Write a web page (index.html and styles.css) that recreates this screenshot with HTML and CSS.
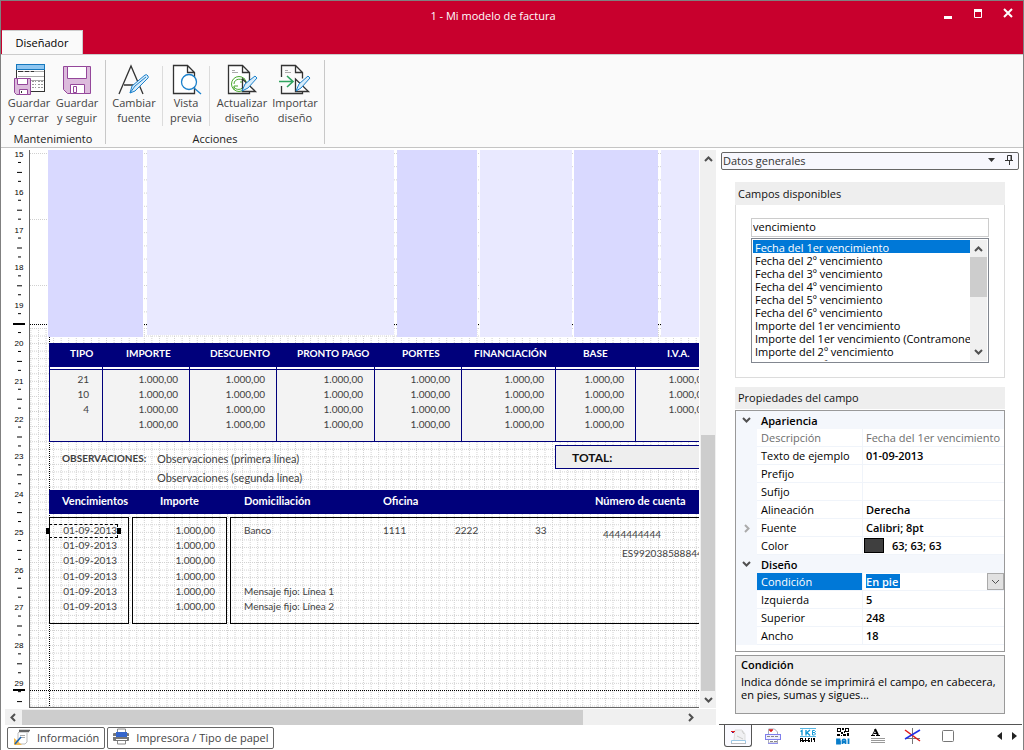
FILE: index.html
```html
<!DOCTYPE html>
<html lang="es">
<head>
<meta charset="utf-8">
<title>1 - Mi modelo de factura</title>
<link rel="stylesheet" href="styles.css">
</head>
<body>
<div class="window">
  <header class="titlebar">
    <h1 class="window-title">1 - Mi modelo de factura</h1>
    <div class="window-buttons">
      <button type="button" aria-label="Minimizar"><svg width="10" height="12"><rect x="1" y="9" width="8" height="3" fill="#fff"/></svg></button>
      <button type="button" aria-label="Maximizar"><svg width="10" height="12"><path d="M1.500 2.500h7v8h-7z" fill="none" stroke="#fff"/><rect x="1" y="2" width="8" height="3" fill="#fff"/></svg></button>
      <button type="button" aria-label="Cerrar"><svg width="10" height="12"><path d="M1 2l8 8M9 2l-8 8" stroke="#fff" stroke-width="2"/></svg></button>
    </div>
    <nav class="ribbon-tabs"><button type="button" class="ribbon-tab">Diseñador</button></nav>
  </header>

  <div class="ribbon">
    <section class="ribbon-group maintenance">
      <div class="ribbon-items">
        <button type="button" class="tool w48">
          <svg width="32" height="32" fill="none"><rect x="3.500" y="1.500" width="28" height="27" fill="#fff" stroke="#333"/><rect x="3.500" y="1.500" width="28" height="5" fill="#8fc6f0" stroke="#1678bd"/><path d="M5 8.500h26M5 13.500h26M9 17.500h22" stroke="#aaa"/><path d="M5 8.500h5M12 8.500h4M18 8.500h3" stroke="#333"/><path d="M19 18.500h4M25 18.500h6M19 21.500h4M25 21.500h6M19 24.500h4M25 24.500h6" stroke="#999" stroke-dasharray="2 1"/><path d="M1.500 15.500h16v16h-14l-2-2z" fill="#dcbbdc" stroke="#94479a"/><path d="M4.500 15.500h10v6h-10zM6.500 26.500h8v5h-8z" fill="#fff" stroke="#94479a"/><path d="M8.500 28v2" stroke="#333"/></svg>
          <span>Guardar<br>y cerrar</span></button>
        <button type="button" class="tool w48">
          <svg width="32" height="32" fill="none"><path d="M2.500 3.500h27v27h-23l-4-4z" fill="#dcbbdc" stroke="#94479a"/><path d="M6.500 3.500h19v12h-19zM9.500 21.500h14v9h-14z" fill="#fff" stroke="#94479a"/><path d="M12.500 23.500h3v6h-3z" stroke="#94479a"/></svg>
          <span>Guardar<br>y seguir</span></button>
      </div>
      <h2>Mantenimiento</h2>
    </section>
    <section class="ribbon-group actions">
      <div class="ribbon-items">
        <button type="button" class="tool w56">
          <svg width="32" height="32" fill="none"><path d="M1 31L13 3L25 31M6 22h14" stroke="#333" stroke-width="1.300"/><path d="M12 30l2-7L27 12q2-1 3 1t-1 3L17 28z" fill="#d8ecfa" stroke="#1a80cc"/><path d="M12 30l5-7L28 14" stroke="#1a80cc"/></svg>
          <span>Cambiar<br>fuente</span></button>
        <span class="tool-separator"></span>
        <button type="button" class="tool w46">
          <svg width="32" height="32" fill="none"><path d="M3.500 2.500h14l7 7v21h-21zM17.500 2.500v7h7" fill="#fff" stroke="#333" stroke-width="1.300"/><circle cx="19" cy="19" r="7.500" fill="#fff" stroke="#1a80cc" stroke-width="1.300"/><path d="M24 25l7 6" stroke="#1a80cc" stroke-width="1.300"/></svg>
          <span>Vista<br>previa</span></button>
        <span class="tool-separator"></span>
        <button type="button" class="tool w64">
          <svg width="32" height="32" fill="none"><path d="M2.500 2.500h14l7 7v21h-21zM16.500 2.500v7h7" fill="#fff" stroke="#333" stroke-width="1.300"/><path d="M6 7.500h3M6 9.500h6" stroke="#aaa"/><circle cx="13" cy="21" r="7.500" stroke="#4aa82e"/><path d="M8 21c0-6 9-6 10-2m0-4v4h-4M18 22c-1 6-9 5-10 2m0 3v-4h4" stroke="#4aa82e"/><path d="M16.500 16v12.500h13z" fill="#fff" stroke="#333" stroke-width="1.300"/><path d="M16 28l3-7L29 13l2 2L22 25z" fill="#d8ecfa" stroke="#1a80cc"/></svg>
          <span>Actualizar<br>diseño</span></button>
        <button type="button" class="tool w48">
          <svg width="32" height="32" fill="none"><path d="M2.500 14v-11.500h14l7 7v6M16.500 2.500v7h7M2.500 23v7.500h21v-2" stroke="#333" stroke-width="1.300"/><path d="M6 7.500h3M6 9.500h6" stroke="#aaa"/><path d="M0 18.500h13M8 13l6 5.500l-6 5.500" stroke="#2fa35e" stroke-width="1.600"/><path d="M16.500 16v12.500h13z" fill="#fff" stroke="#333" stroke-width="1.300"/><path d="M17 28l3-7L29 13l2 2L22 25z" fill="#d8ecfa" stroke="#1a80cc"/></svg>
          <span>Importar<br>diseño</span></button>
      </div>
      <h2>Acciones</h2>
    </section>
  </div>

  <main class="workspace">
    <section class="designer">
      <div class="sheet">
        <svg class="ruler" aria-label="Regla vertical" shape-rendering="crispEdges">
          <defs><pattern id="ticks" x="0" y="3" width="29" height="37.800" patternUnits="userSpaceOnUse"><path d="M18 9h3v1h-3zM17 19h5v1h-5zM18 28h3v1h-3z"/></pattern></defs>
          <rect width="29" height="100%" fill="url(#ticks)"/>
          <path d="M13 174h12M13 540h12" stroke="#000" stroke-width="2"/>
          <g class="ruler-numbers"><text x="19" y="7">15</text><text x="19" y="45">16</text><text x="19" y="83">17</text><text x="19" y="120">18</text><text x="19" y="158">19</text><text x="19" y="196">20</text><text x="19" y="234">21</text><text x="19" y="272">22</text><text x="19" y="309">23</text><text x="19" y="347">24</text><text x="19" y="385">25</text><text x="19" y="423">26</text><text x="19" y="460">27</text><text x="19" y="498">28</text><text x="19" y="536">29</text></g>
        </svg>
        <div class="canvas">
          <svg class="grid-lines" shape-rendering="crispEdges">
            <defs>
              <pattern id="rows" x="0" y="178" width="2" height="7.550" patternUnits="userSpaceOnUse"><rect width="1" height="1" fill="#d0d0d0"/></pattern>
              <pattern id="cols" x="8" y="0" width="7.560" height="2" patternUnits="userSpaceOnUse"><rect width="1" height="1" fill="#d0d0d0"/></pattern>
              <pattern id="far" x="0" y="3" width="2" height="13.200" patternUnits="userSpaceOnUse"><rect width="1" height="1" fill="#d0d0d0"/></pattern>
            </defs>
            <rect x="110" width="100%" height="177" fill="url(#far)"/>
            <path d="M0 3.500h18M0 69.500h18M0 135.500h18" stroke="#d0d0d0" stroke-dasharray="1 1"/>
            <rect y="178" width="100%" height="100%" fill="url(#rows)"/>
            <rect y="178" width="100%" height="100%" fill="url(#cols)"/>
            <path d="M0 174.500h2000M0 540.500h2000M19.500 187v2000" stroke="#000" stroke-dasharray="1 1"/>
          </svg>
          <div class="band dark band-1"></div><div class="band light band-2"></div><div class="band dark band-3"></div>
          <div class="band light band-4"></div><div class="band dark band-5"></div><div class="band light band-6"></div>

          <table class="totals">
            <colgroup><col class="c53"><col class="c87"><col class="c87"><col class="c98"><col class="c87"><col class="c94"><col class="c80"><col class="c84"></colgroup>
            <thead><tr><th class="pad-21">TIPO</th><th class="pad-24">IMPORTE</th><th class="pad-21">DESCUENTO</th><th class="pad-21">PRONTO PAGO</th><th class="pad-28">PORTES</th><th class="pad-13">FINANCIACIÓN</th><th class="pad-28">BASE</th><th class="pad-32">I.V.A.</th></tr></thead>
            <tbody>
              <tr><td>21</td><td>1.000,00</td><td>1.000,00</td><td>1.000,00</td><td>1.000,00</td><td>1.000,00</td><td>1.000,00</td><td>1.000,00</td></tr>
              <tr><td>10</td><td>1.000,00</td><td>1.000,00</td><td>1.000,00</td><td>1.000,00</td><td>1.000,00</td><td>1.000,00</td><td>1.000,00</td></tr>
              <tr><td>4</td><td>1.000,00</td><td>1.000,00</td><td>1.000,00</td><td>1.000,00</td><td>1.000,00</td><td>1.000,00</td><td>1.000,00</td></tr>
              <tr><td></td><td>1.000,00</td><td>1.000,00</td><td>1.000,00</td><td>1.000,00</td><td>1.000,00</td><td>1.000,00</td><td></td></tr>
            </tbody>
          </table>

          <div class="field notes-label">OBSERVACIONES:</div>
          <div class="field notes-1">Observaciones (primera línea)</div>
          <div class="field notes-2">Observaciones (segunda línea)</div>
          <div class="field total-box">TOTAL:</div>

          <div class="due-header"></div>
          <div class="field head h-due">Vencimientos</div><div class="field head h-amount">Importe</div><div class="field head h-bank">Domiciliación</div><div class="field head h-office">Oficina</div><div class="field head h-account">Número de cuenta</div>

          <div class="due-box box-dates"><span>01-09-2013</span><span>01-09-2013</span><span>01-09-2013</span><span>01-09-2013</span><span>01-09-2013</span><span>01-09-2013</span></div>
          <div class="due-box box-amounts"><span>1.000,00</span><span>1.000,00</span><span>1.000,00</span><span>1.000,00</span><span>1.000,00</span><span>1.000,00</span></div>
          <div class="due-box box-bank"><span>Banco</span><span></span><span></span><span></span><span>Mensaje fijo: Línea 1</span><span>Mensaje fijo: Línea 2</span></div>
          <div class="field digits bank-office">1111</div><div class="field digits bank-branch">2222</div><div class="field digits bank-control">33</div>
          <div class="field digits bank-account">4444444444</div><div class="field digits bank-iban">ES9920385888444444</div>
          <div class="selection"></div>
        </div>
        <div class="scroll-v">
          <svg width="9" height="6"><path d="M1 5l3.500-3.500L8 5" class="arrow"/></svg>
          <div class="track-v"><div class="thumb-v"></div></div>
          <svg width="9" height="6"><path d="M1 1l3.500 3.500L8 1" class="arrow"/></svg>
        </div>
      </div>
      <div class="scroll-h">
        <svg width="6" height="9"><path d="M5 1L1.500 4.500L5 8" class="arrow"/></svg>
        <div class="track-h"><div class="thumb-h"></div></div>
        <svg width="6" height="9"><path d="M1 1l3.500 3.500L1 8" class="arrow"/></svg>
      </div>
      <div class="bottom-buttons">
        <button type="button"><svg width="18" height="18" fill="none"><path d="M16 3h-9l-2 2v9l-2 2h9l2-2v-9" stroke="#bbb"/><path d="M6 3.500h10M6 2.500h11" stroke="#666" stroke-width="1.500"/><path d="M7 7.500h5M7 9.500h5" stroke="#aaa"/><path d="M1 10l8 7h-8z" fill="#f2b950"/><path d="M2 16l6-7" stroke="#1d64b0" stroke-width="1.600"/></svg>Información</button>
        <button type="button"><svg width="18" height="18" fill="none"><path d="M5.500 5v-4h8v4M5.500 12v4h8v-4" fill="#fff" stroke="#888"/><rect x="1" y="5" width="16" height="8" rx="1" fill="#777"/><rect x="4" y="4" width="11" height="5" fill="#3566cc"/><path d="M1 8.500h3M15 8.500h2M4 11.500h11" stroke="#fff"/></svg>Impresora / Tipo de papel</button>
      </div>
    </section>

    <aside class="side">
      <div class="panel-title"><span>Datos generales</span>
        <svg width="27" height="12"><path d="M0 4h7l-3.500 4z" fill="#333"/><path d="M19.500 1.500h4v5h-4zM17 6.500h8M21.500 7v4" fill="none" stroke="#333"/><path d="M23 1v5" stroke="#333"/></svg>
      </div>
      <div class="side-body">
        <section class="fields-group">
          <h3><label for="search">Campos disponibles</label></h3>
          <div class="fields-body">
            <input id="search" type="text" value="vencimiento">
            <div class="list-wrap">
              <select size="9" aria-label="Campos">
                <option selected>Fecha del 1er vencimiento</option><option>Fecha del 2º vencimiento</option><option>Fecha del 3º vencimiento</option><option>Fecha del 4º vencimiento</option><option>Fecha del 5º vencimiento</option><option>Fecha del 6º vencimiento</option><option>Importe del 1er vencimiento</option><option>Importe del 1er vencimiento (Contramoneda)</option><option>Importe del 2º vencimiento</option><option>Importe del 2º vencimiento (Contramoneda)</option>
              </select>
              <div class="list-scroll">
                <svg width="9" height="6"><path d="M1 5l3.500-3.500L8 5" class="arrow"/></svg>
                <div class="list-track"><div class="list-thumb"></div></div>
                <svg width="9" height="6"><path d="M1 1l3.500 3.500L8 1" class="arrow"/></svg>
              </div>
            </div>
          </div>
        </section>
        <section class="props-group">
          <h3>Propiedades del campo</h3>
          <table class="props">
            <colgroup><col class="gutter-col"><col class="name-col"><col></colgroup>
            <tbody>
            <tr class="cat"><td><svg width="9" height="6"><path d="M1 1l3.500 3.500L8 1" class="arrow"/></svg></td><th colspan="2">Apariencia</th></tr>
            <tr class="muted"><td></td><th>Descripción</th><td>Fecha del 1er vencimiento</td></tr>
            <tr><td></td><th>Texto de ejemplo</th><td>01-09-2013</td></tr>
            <tr><td></td><th>Prefijo</th><td></td></tr>
            <tr><td></td><th>Sufijo</th><td></td></tr>
            <tr><td></td><th>Alineación</th><td>Derecha</td></tr>
            <tr><td><svg width="6" height="9"><path d="M1 1l3.500 3.500L1 8" class="arrow faint"/></svg></td><th>Fuente</th><td>Calibri; 8pt</td></tr>
            <tr><td></td><th>Color</th><td><div class="color-value"><i class="swatch"></i>63; 63; 63</div></td></tr>
            <tr class="cat"><td><svg width="9" height="6"><path d="M1 1l3.500 3.500L8 1" class="arrow"/></svg></td><th colspan="2">Diseño</th></tr>
            <tr class="active"><td></td><th><label for="cond">Condición</label></th><td class="edit"><div class="drop"><select id="cond"><option>En pie</option></select><span class="drop-arrow"><svg width="9" height="6"><path d="M1 1l3.500 3.500L8 1" class="arrow thin"/></svg></span></div></td></tr>
            <tr><td></td><th>Izquierda</th><td>5</td></tr>
            <tr><td></td><th>Superior</th><td>248</td></tr>
            <tr><td></td><th>Ancho</th><td>18</td></tr>
            </tbody>
          </table>
          <div class="help"><h4>Condición</h4><p>Indica dónde se imprimirá el campo, en cabecera, en pies, sumas y sigues...</p></div>
        </section>
      </div>
      <nav class="side-tabs">
        <button type="button" class="current" aria-label="Datos generales"><svg width="18" height="18" fill="none"><path d="M5 13l1-10h7l3 4v6" fill="#f0f0f3" stroke="#ddd"/><path d="M2 4.500h4M4.500 4v2" stroke="#e02020"/><path d="M3 5.500h1" stroke="#2222bb"/><path d="M8 9l6 3M13 4l2 3" stroke="#ccc"/><path d="M2.500 16v-2.500h14v2.500" fill="#fff" stroke="#9cc8e6"/><path d="M2 16.500h15" stroke="#b9b9bd"/></svg></button>
        <button type="button" aria-label="Cuerpo"><svg width="18" height="18" fill="none"><path d="M4.500 7v-5h6l3 3v11h-9v-4" stroke="#aaaaba"/><path d="M5 3h4M6 4h2" stroke="#dd2020" stroke-width="1.400"/><rect x="1.500" y="7.500" width="15" height="5" fill="#eef" stroke="#7f7fec"/><path d="M3 9.500h12M6 14.500h7" stroke="#888" stroke-dasharray="3 1"/><path d="M4 16.500h10" stroke="#9090ee"/></svg></button>
        <button type="button" aria-label="Código de barras"><svg width="18" height="18"><path d="M1 1.500h16M1 9.500h16" stroke="#58b7e4"/><path d="M1.500 4.500l1.500-1v5M7 3v5.500M11 3l-3 2.500l3 3" fill="none" stroke="#149bd8" stroke-width="1.400"/><path d="M13.500 3.500h2l1 1l-1 1h-2zM13.500 5.500h2l1 1.500l-1 1h-2z" fill="none" stroke="#149bd8"/><path d="M1 11h3v2h2v-2h1v2h2v1h-2v1h-1v-1h-1v1h-2v-1h-1v1h-1zM9 11h2v1h-1v1h1v2h-2zM12 11h1v2h1v-2h2v4h-1v-2h-2v2h-1zM3 12h-1v1h1z" fill-rule="evenodd"/></svg></button>
        <button type="button" aria-label="Código QR"><svg width="18" height="18"><path d="M3 1h4v4h-4zM11 1h4v4h-4zM3 7h3v2h-3zM7 5h2v2h-2zM9 7h3v2h-3zM13 6h2v3h-2zM8 1h2v2h-2zM7 8h1v1h-1zM10 4h1v2h-1z"/><path d="M4 2h2v2h-2zM12 2h2v2h-2z" fill="#fff"/><path d="M3 12.500h2.500v1.500h-2.500zM3 14.500h3v2h-3zM8.500 17v-3.500q0-1 1.500-1t1.500 1v3.500M9 15h2M14.500 11.500v5.500" fill="none" stroke="#087dca" stroke-width="1.800"/></svg></button>
        <button type="button" aria-label="Texto"><svg width="18" height="18" fill="none"><path d="M2 8.500h4M7 8.500h4" stroke="#000"/><path d="M3.500 8L6.500 2" stroke="#000"/><path d="M6 2l3 6" stroke="#000" stroke-width="2"/><path d="M5 6.500h3" stroke="#000"/><path d="M2 11.500h14M2 13.500h14M2 15.500h14" stroke="#999"/></svg></button>
        <button type="button" aria-label="Línea"><svg width="18" height="18" fill="none"><path d="M8.500 1v16M1 11.500h15" stroke="#777"/><path d="M1 3l15 11" stroke="#e01818" stroke-width="1.500"/><path d="M1 12L16 3" stroke="#2030e8" stroke-width="1.500"/></svg></button>
        <button type="button" aria-label="Rectángulo"><svg width="18" height="18"><rect x="3.500" y="3.500" width="11" height="11" rx="1" fill="#fff" stroke="#777"/></svg></button>
        <button type="button" class="nav-arrows" aria-label="Desplazar"><svg width="20" height="10"><path d="M5 1v8l-5-4zM15 1v8l5-4z" fill="#222"/></svg></button>
      </nav>
    </aside>
  </main>
</div>
</body>
</html>
```
FILE: styles.css
```css
* { box-sizing: border-box; }
body { margin: 0; font: 11px/15px "Open Sans", "Noto Sans", sans-serif; color: #000; background: #fff; }
button, input, select { font: inherit; color: inherit; margin: 0; }
button { border: 0; padding: 0; background: none; }
h1, h2, h3, h4, p { margin: 0; font-size: inherit; font-weight: normal; }
svg { display: block; flex: none; }
.window { min-height: 100vh; display: flex; flex-direction: column; border: 1px solid #808080; border-bottom: 0; }

.titlebar { display: grid; grid-template-columns: 1fr auto 1fr; grid-template-rows: 29px 24px; background: #c8002d; }
.window-title { grid-column: 2; align-self: center; margin-right: 38px; color: #fff; }
.window-buttons { justify-self: end; display: flex; gap: 20px; align-items: center; padding: 0 10px 6px 0; }
.ribbon-tabs { grid-column: 1; grid-row: 2; display: flex; padding-left: 1px; }
.ribbon-tab { width: 81px; background: #fafafa; border-top: 1px solid #ccc; border-right: 1px solid #ccc; }

.ribbon { display: flex; background: #fafafa; border-top: 1px solid #ccc; border-bottom: 1px solid #c4c4c4; height: 94px; }
.ribbon-group { display: flex; flex-direction: column; justify-content: space-between; border-right: 1px solid #c8c8c8; margin: 5px 0 4px; height: 84px; }
.ribbon-items { display: flex; align-items: flex-start; }
.ribbon-group h2 { text-align: center; line-height: 11px; color: #222; }
.maintenance .ribbon-items { padding: 0 4px; }
.tool { display: flex; flex-direction: column; align-items: center; color: #444; padding-top: 3px; }
.w48 { width: 48px; } .w56 { width: 56px; } .w46 { width: 46px; } .w64 { width: 64px; }
.tool-separator { width: 1px; height: 60px; margin-top: 6px; background: #dcdcdc; }
.actions .ribbon-items { padding-right: 5px; }
.actions .w64 { margin-right: -3px; }

.workspace { flex: 1; display: flex; }
.designer { flex: 1; min-width: 0; display: flex; flex-direction: column; padding-top: 2px; }
.sheet { flex: 1; display: flex; min-height: 558px; }
.ruler { width: 29px; height: auto; margin-left: -1px; border-right: 1px solid #666; box-sizing: content-box; }
.ruler-numbers { font: 8px "Liberation Sans", sans-serif; text-anchor: middle; }
.canvas { flex: 1; position: relative; overflow: hidden; border-bottom: 1px solid #666; font: 11px/15px Lato, sans-serif; color: #3f3f3f; }
.grid-lines { position: absolute; width: 100%; height: 100%; }
.band { position: absolute; top: 0; height: 187px; }
.dark { background: #d9d9ff; } .light { background: #e9e9ff; }
.band-1 { left: 18px; width: 95px; }
.band-2 { left: 117px; width: 247px; height: 185px; }
.band-3 { left: 367px; width: 80px; }
.band-4 { left: 450px; width: 92px; }
.band-5 { left: 544px; width: 84px; }
.band-6 { left: 631px; right: 0; }

.totals { position: absolute; left: 19px; top: 193px; width: 670px; table-layout: fixed; border-spacing: 0; border-bottom: 1px solid #00007b; }
.c53 { width: 53px; } .c87 { width: 87px; } .c98 { width: 98px; } .c94 { width: 94px; } .c80 { width: 80px; } .c84 { width: 84px; }
.totals th { height: 24px; padding: 0 0 3px; background: #00007b; color: #fff; font-weight: bold; text-align: left; white-space: nowrap; font-size: 10px; }
.totals .pad-13 { padding-left: 13px; } .totals .pad-21 { padding-left: 21px; } .totals .pad-24 { padding-left: 24px; } .totals .pad-28 { padding-left: 28px; } .totals .pad-32 { padding-left: 32px; }
.totals td { padding: 0 11px 0 0; text-align: right; height: 15px; background: #f3f3f3; border-left: 1px solid #00007b; font-size: 10px; }
.totals td:first-child { padding-right: 13px; }
.totals tbody tr:first-child td { padding-top: 5px; background: linear-gradient(#fff 2px, #00007b 2px, #00007b 3px, #f3f3f3 3px); }
.totals tbody tr:last-child td { padding-bottom: 9px; }

.field { position: absolute; white-space: nowrap; }
.notes-label { left: 32px; top: 301px; font-weight: bold; font-size: 10px; }
.notes-1 { left: 127px; top: 301px; }
.notes-2 { left: 127px; top: 320px; }
.total-box { left: 525px; top: 295px; right: -2px; height: 24px; padding: 4px 16px; background: #eee; border: 1px solid #00007b; color: #111; font-weight: bold; font-size: 12px; }
.due-header { position: absolute; left: 19px; right: 0; top: 340px; height: 24px; background: #00007b; }
.head { top: 343px; color: #fff; font-weight: bold; }
.h-due { left: 32px; } .h-amount { left: 130px; } .h-bank { left: 214px; } .h-office { left: 353px; } .h-account { left: 565px; }
.due-box { position: absolute; top: 367px; height: 107px; padding-top: 5px; border: 1px solid #000; display: flex; flex-direction: column; font-size: 10px; }
.due-box span { height: 15px; }
.due-box span:nth-child(3) { margin-bottom: 1px; }
.box-dates { left: 19px; width: 80px; align-items: flex-end; padding-right: 11px; }
.box-amounts { left: 102px; width: 95px; align-items: flex-end; padding-right: 11px; }
.box-bank { left: 200px; right: -2px; padding-left: 13px; }
.digits { font-size: 10px; }
.bank-office { left: 353px; top: 373px; } .bank-branch { left: 425px; top: 373px; } .bank-control { left: 505px; top: 373px; }
.bank-account { left: 573px; top: 377px; } .bank-iban { left: 592px; top: 396px; }
.selection { position: absolute; left: 19px; top: 374px; width: 69px; height: 14px; border: 1px dashed #000; }
.selection::before, .selection::after { content: ""; position: absolute; top: 3px; width: 4px; height: 6px; background: #000; }
.selection::before { left: -4px; }
.selection::after { right: -4px; }

.arrow { fill: none; stroke: #505050; stroke-width: 2; }
.arrow.faint { stroke: #aaa; }
.arrow.thin { stroke-width: 1; }
.scroll-v { width: 16px; margin: 0 1px 0 1px; background: #f0f0f0; display: flex; flex-direction: column; align-items: center; padding: 6px 0 5px; gap: 6px; }
.track-v { flex: 1; width: 14px; display: flex; flex-direction: column; justify-content: flex-end; }
.thumb-v { height: 49%; background: #cdcdcd; }
.scroll-h { height: 16px; margin: 1px 1px 0 4px; background: #f0f0f0; display: flex; align-items: center; padding: 0 22px 0 5px; gap: 6px; }
.track-h { flex: 1; height: 15px; }
.thumb-h { width: 85%; height: 100%; background: #cdcdcd; }
.bottom-buttons { display: flex; gap: 2px; padding: 2px 6px 1px; }
.bottom-buttons button { display: flex; align-items: center; gap: 6px; height: 22px; padding: 0 5px 2px; border: 1px solid #666; border-radius: 2px; background: #fff; color: #444; }
.bottom-buttons button + button { padding: 0 4px 2px; }

.side { flex: none; width: 306px; display: flex; flex-direction: column; padding: 4px 1px 2px 2px; }
.panel-title { display: flex; align-items: center; justify-content: space-between; height: 18px; margin: 0 3px 0 2px; padding: 0 3px 2px 1px; border: 1px solid #666; border-radius: 2px; background: #f7f7fd; color: #333; }
.side-body { padding: 12px 17px 0 16px; }
.side h3 { background: #eee; line-height: 23px; padding-left: 3px; color: #111; }
.fields-body { border: 1px solid #dcdcdc; border-top: 0; padding: 13px 15px 14px 15px; }
#search { display: block; width: 100%; height: 19px; padding: 0 1px 2px; border: 1px solid #ccc; border-radius: 0; outline: 0; }
.list-wrap { display: flex; height: 125px; margin-top: 1px; border: 1px solid #828790; padding: 1px; }
.list-wrap select { flex: 1; min-width: 0; border: 0; padding: 0; outline: 0; overflow: hidden; background: #fff; border-radius: 0; scrollbar-width: none; height: 121px; }
.list-wrap option { padding: 0 2px; height: 13px; min-height: 13px; line-height: 11px; }
.list-wrap option:checked { background: #0078d7 linear-gradient(#0078d7, #0078d7); color: #fff; }
.list-scroll { width: 17px; background: #f0f0f0; display: flex; flex-direction: column; align-items: center; padding: 6px 0; gap: 5px; }
.list-track { flex: 1; width: 100%; }
.list-thumb { height: 46%; background: #cdcdcd; }

.props-group { margin-top: 9px; }
.props-group h3 { line-height: 22px; margin-bottom: 1px; }
.props { width: 100%; table-layout: fixed; border-collapse: separate; border-spacing: 0; border: 1px solid #999; padding-bottom: 6px; }
.gutter-col { width: 21px; } .name-col { width: 106px; }
.props td, .props th { height: 18px; line-height: 17px; padding: 0 0 0 4px; text-align: left; white-space: nowrap; border-bottom: 1px solid #f0f4fa; }
.props th { font-weight: normal; border-right: 1px solid #f0f4fa; }
.props td { font-weight: 600; padding-left: 3px; }
.props td:first-child { background: #f4f7fc; padding: 0; border: 0; }
.props td:first-child svg { margin: 0 auto; }
.props .cat th { background: #f4f7fc; font-weight: 600; border: 0; }
.props .muted th, .props .muted td { color: #6d6d6d; font-weight: normal; }
.props .active th { background: #0078d7; color: #fff; }
.props td.edit { padding: 0; }
.color-value { display: flex; align-items: center; gap: 8px; margin-left: -2px; }
.swatch { width: 20px; height: 15px; background: #3f3f3f; border: 1px solid #000; }
.drop { position: relative; height: 17px; }
.drop select { appearance: none; width: 100%; height: 17px; border: 0; padding: 0 3px; outline: 0; color: #fff; font-weight: 600; line-height: 15px; background: linear-gradient(#0078d7, #0078d7) 3px 1px / 34px 14px no-repeat #fff; }
.drop-arrow { position: absolute; right: 0; top: 0; width: 17px; height: 17px; display: grid; place-items: center; border: 1px solid #aaa; background: #e1e1e1; pointer-events: none; }
.help { margin-top: 3px; min-height: 59px; padding: 1px 5px; border: 1px solid #999; background: #eee; }
.help h4 { font-weight: 600; line-height: 16px; margin-bottom: 2px; }
.help p { line-height: 13px; }

.side-tabs { margin-top: auto; display: flex; align-items: flex-start; height: 24px; border-top: 1px solid #555; padding-left: 5px; gap: 7px; }
.side-tabs button { width: 28px; height: 22px; display: grid; place-items: center; }
.side-tabs .current { background: #fafaff; border: 1px solid #555; border-top: 0; border-radius: 0 0 3px 3px; }
.side-tabs .nav-arrows { margin-left: auto; margin-right: 1px; }
```
